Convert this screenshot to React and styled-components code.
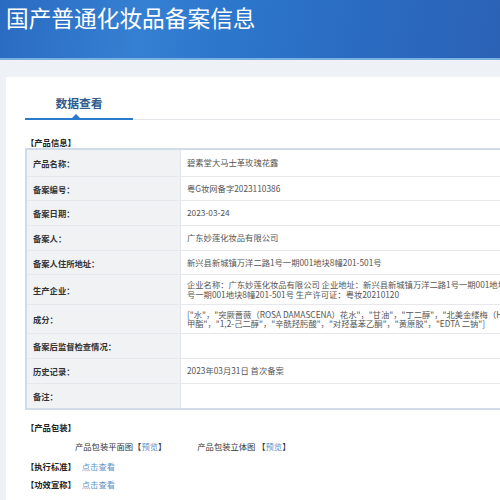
import React from 'react'
import styled, { createGlobalStyle } from 'styled-components'

const GlobalStyle = createGlobalStyle`
  html, body {
    margin: 0;
    padding: 0;
    background: #eef2f6;
    overflow: hidden;
  }
  body {
    font-family: "Noto Sans CJK SC", "Noto Sans", sans-serif;
  }
`

const rows = [
  { label: '产品名称：', value: ['碧素堂大马士革玫瑰花露'], h: 26 },
  { label: '备案编号：', value: ['粤G妆网备字2023110386'], h: 24 },
  { label: '备案日期：', value: ['2023-03-24'], h: 25 },
  { label: '备案人：', value: ['广东妙莲化妆品有限公司'], h: 25 },
  { label: '备案人住所地址：', value: ['新兴县新城镇万洋二路1号一期001地块8幢201-501号'], h: 24 },
  {
    label: '生产企业：',
    value: [
      '企业名称：广东妙莲化妆品有限公司 企业地址：新兴县新城镇万洋二路1号一期001地块8幢201-501号 生产地址：新兴县新城镇万洋二路1',
      '号一期001地块8幢201-501号 生产许可证：粤妆20210120',
    ],
    h: 30,
  },
  {
    label: '成分：',
    value: [
      '["水"，"突厥蔷薇（ROSA DAMASCENA）花水"，"甘油"，"丁二醇"，"北美金缕梅（HAMAMELIS VIRGINIANA）叶提取物"，"苯氧乙醇"，"羟苯',
      '甲酯"，"1,2-己二醇"，"辛酰羟肟酸"，"对羟基苯乙酮"，"黄原胶"，"EDTA 二钠"]',
    ],
    h: 29,
  },
  { label: '备案后监督检查情况：', value: [], h: 25 },
  { label: '历史记录：', value: ['2023年03月31日 首次备案'], h: 25 },
  { label: '备注：', value: [], h: 25 },
]

const App = () => {
  return (
    <>
      <GlobalStyle />
      <Header>
        <Title>国产普通化妆品备案信息</Title>
      </Header>
      <Band>
        <Card>
          <TabBar>
            <Tab>数据查看</Tab>
          </TabBar>
          <SectionTitle>【产品信息】</SectionTitle>
          <Table>
            {rows.map(row => (
              <Row key={row.label} $h={row.h}>
                <Label>{row.label}</Label>
                <Value>
                  {row.value.map(line => (
                    <Line key={line}>{line}</Line>
                  ))}
                </Value>
              </Row>
            ))}
          </Table>
          <SectionTitle $top={11}>【产品包装】</SectionTitle>
          <Packs>
            <Pack>产品包装平面图【<Link>预览</Link>】</Pack>
            <Pack>产品包装立体图 【<Link>预览</Link>】</Pack>
          </Packs>
          <InfoLine>
            <Strong>【执行标准】</Strong>
            <Link>点击查看</Link>
          </InfoLine>
          <InfoLine>
            <Strong>【功效宣称】</Strong>
            <Link>点击查看</Link>
          </InfoLine>
        </Card>
      </Band>
    </>
  )
}

export default App

const Header = styled.header`
  height: 60px;
  padding: 5px 6px 0;
  box-sizing: border-box;
  background: linear-gradient(100deg, #2a6bc1 0%, #3580d2 28%, #2c77cc 45%, #2a6cc2 70%, #2b62b6 100%);
  border-bottom: 2px solid #79b0e2;
`
const Title = styled.h1`
  margin: 0;
  font-size: 22.7px;
  line-height: 26px;
  font-weight: 400;
  color: #ffffff;
`
const Band = styled.div`
  padding: 17px 0 0 6px;
`
const Card = styled.div`
  background: #ffffff;
  padding: 0 0 40px 19px;
  overflow: hidden;
  height: 440px;
`
const TabBar = styled.div`
  height: 42px;
  border-bottom: 1px solid #e2e6ea;
  display: flex;
`
const Tab = styled.div`
  position: relative;
  width: 108px;
  display: flex;
  align-items: center;
  justify-content: center;
  padding-top: 9px;
  box-sizing: border-box;
  font-size: 11.8px;
  font-weight: 700;
  color: #2f5b8e;
  border-bottom: 2px solid #2a7bcb;
  margin-bottom: -1px;
  &::after {
    content: '';
    position: absolute;
    left: 47px;
    bottom: 0;
    border-left: 4px solid transparent;
    border-right: 4px solid transparent;
    border-bottom: 4px solid #2a7bcb;
  }
`
const SectionTitle = styled.div`
  margin-top: ${p => p.$top ?? 16}px;
  height: 12px;
  line-height: 12px;
  margin-left: 1px;
  font-size: 8.3px;
  font-weight: 700;
  color: #222;
  margin-bottom: ${p => (p.$top ? 7 : 0)}px;
`
const Table = styled.div`
  width: 700px;
  border: 2px solid #cfdbe8;
  border-right: none;
`
const Row = styled.div`
  display: flex;
  box-sizing: border-box;
  height: ${p => p.$h}px;
  & + & {
    border-top: 1px solid #e6e8eb;
  }
`
const Label = styled.div`
  width: 147px;
  flex-shrink: 0;
  padding-left: 6px;
  display: flex;
  align-items: center;
  background: #f1f2f3;
  border-right: 1px solid #e3e5e8;
  font-size: 8.3px;
  font-weight: 700;
  color: #333;
`
const Value = styled.div`
  flex: 1;
  padding-left: 6px;
  display: flex;
  flex-direction: column;
  justify-content: center;
  font-size: 8.3px;
  color: #555;
`
const Line = styled.div`
  white-space: nowrap;
  line-height: 9.5px;
`
const Packs = styled.div`
  display: flex;
  gap: 31px;
  padding-left: 50px;
  margin-bottom: 8px;
`
const Pack = styled.div`
  font-size: 8.3px;
  color: #333;
  line-height: 12px;
`
const Link = styled.span`
  color: #5b90c8;
`
const InfoLine = styled.div`
  display: flex;
  gap: 6px;
  margin-left: 1px;
  font-size: 8.3px;
  line-height: 12px;
  margin-bottom: 6px;
`
const Strong = styled.span`
  font-weight: 700;
  color: #222;
`
